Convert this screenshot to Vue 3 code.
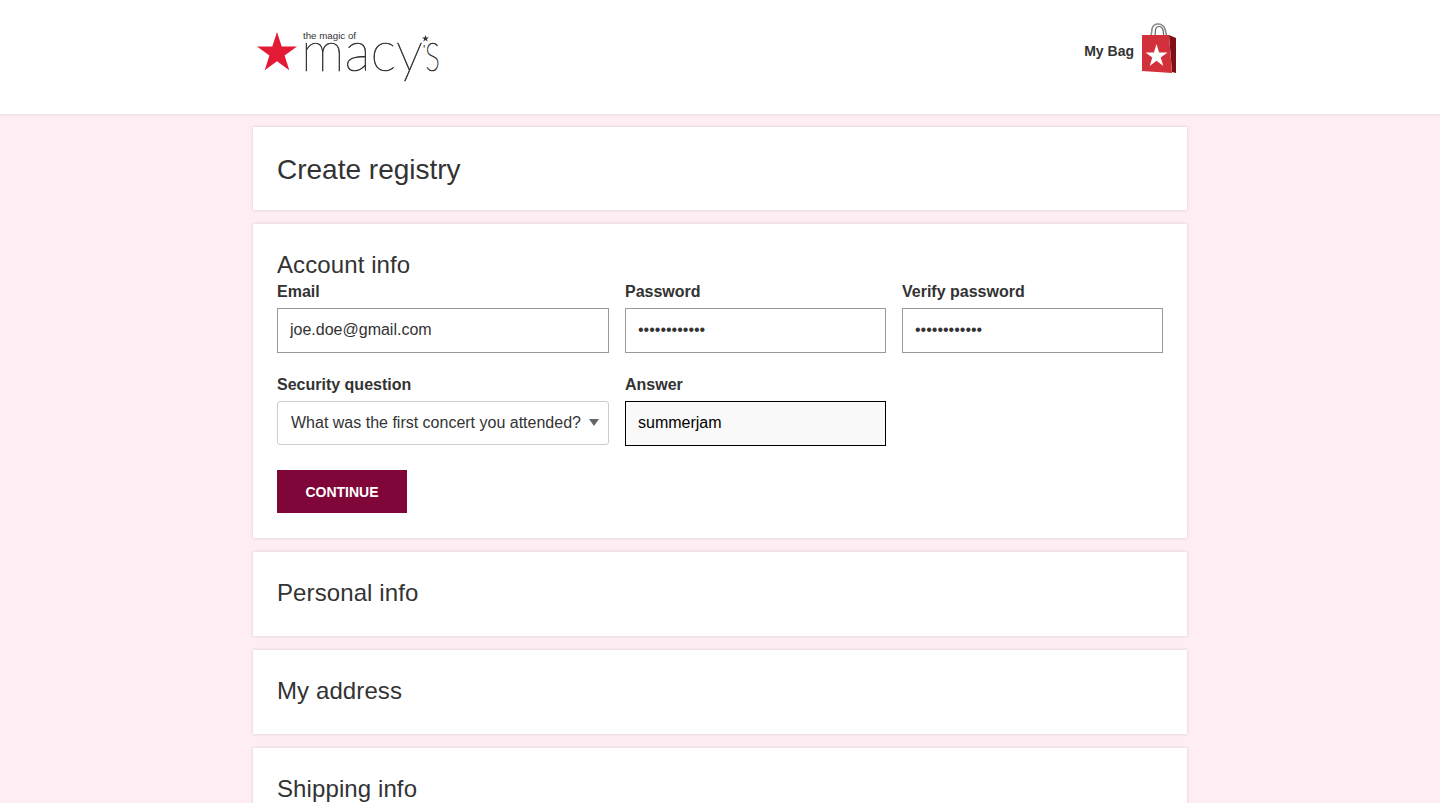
<template>
  <div class="page">
    <header class="topbar">
      <div class="topbar-in">
        <svg class="logo" width="210" height="88" viewBox="0 -24 210 88">
          <polygon fill="#e21a35" points="24,4 28.7,18.6 44,18.6 31.6,27.6 36.3,42.2 24,33.2 11.7,42.2 16.4,27.6 4,18.6 19.3,18.6" />
          <text x="50" y="11" class="logo-small" textLength="53" lengthAdjust="spacingAndGlyphs">the magic of</text>
          <text x="48" y="43" class="logo-word" textLength="122" lengthAdjust="spacingAndGlyphs">macy</text>
          <text x="170" y="26" class="logo-tick">'</text>
          <text x="172" y="43" class="logo-word" textLength="15" lengthAdjust="spacingAndGlyphs">s</text>
          <polygon fill="#333" points="172.5,7 173.4,9.5 176,9.5 173.9,11 174.7,13.5 172.5,12 170.3,13.5 171.1,11 169,9.5 171.6,9.5" />
        </svg>
        <div class="bag">
          <span class="bag-label">My Bag</span>
          <svg width="36" height="52" viewBox="0 0 36 52">
            <path d="M10 14 L11 6 Q12 1 17 1 Q22 1 24 6 L26 14" fill="none" stroke="#8a8a8a" stroke-width="1.6" />
            <path d="M14 13 L14.5 7 Q15 3.5 18 3.5 Q21 3.5 22 7 L23 14" fill="none" stroke="#666" stroke-width="1.2" />
            <polygon fill="#7e1016" points="28,12 35,15 35,50 31,49" />
            <polygon fill="#d2303a" points="1,12 28,12 31,50 1,48" />
            <polygon fill="#fff" points="15.5,21 18.1,29.4 26.5,29.4 19.7,34.6 22.3,43 15.5,37.8 8.7,43 11.3,34.6 4.5,29.4 12.9,29.4" />
          </svg>
        </div>
      </div>
    </header>

    <main class="wrap">
      <section class="card head-card">
        <h1>Create registry</h1>
      </section>

      <section class="card account">
        <h2>Account info</h2>
        <div class="form">
          <div class="field">
            <label>Email</label>
            <input type="text" value="joe.doe@gmail.com" />
          </div>
          <div class="field">
            <label>Password</label>
            <input type="password" value="123456789012" />
          </div>
          <div class="field">
            <label>Verify password</label>
            <input type="password" value="123456789012" />
          </div>
          <div class="field">
            <label>Security question</label>
            <div class="select-box">
              <select>
                <option>What was the first concert you attended?</option>
              </select>
              <span class="caret"></span>
            </div>
          </div>
          <div class="field">
            <label>Answer</label>
            <input class="active" type="text" value="summerjam" />
          </div>
        </div>
        <button class="continue">CONTINUE</button>
      </section>

      <section v-for="t in sections" :key="t" class="card closed">
        <h2>{{ t }}</h2>
      </section>
    </main>
  </div>
</template>

<script setup>
const sections = ['Personal info', 'My address', 'Shipping info']
</script>

<style>
html, body { overflow: hidden; height: 803px; }
</style>

<style scoped>
.page {
  min-height: 803px;
  background: #feeef3;
  font-family: "Liberation Sans", Arial, sans-serif;
  color: #333;
}
.topbar {
  height: 114px;
  background: #fff;
  box-shadow: 0 1px 3px rgba(0, 0, 0, 0.08);
}
.topbar-in {
  width: 934px;
  margin: 0 auto;
  height: 100%;
  display: flex;
  justify-content: space-between;
  align-items: flex-start;
}
.logo { margin: 4px 0 0 0; }
.logo-small { font-family: "Liberation Sans", sans-serif; font-size: 8.5px; fill: #333; }
.logo-word { font-family: Lato, sans-serif; font-weight: 100; font-size: 56px; fill: #333; stroke: #333; stroke-width: 0.6px; }
.logo-tick { font-family: "Liberation Sans", sans-serif; font-size: 12px; fill: #333; }
.bag {
  display: flex;
  align-items: center;
  gap: 7px;
  margin: 23px 10px 0 0;
}
.bag-label {
  font-size: 14px;
  font-weight: 700;
  margin-top: 4px;
}
.wrap {
  width: 934px;
  margin: 13px auto 0;
  display: flex;
  flex-direction: column;
  gap: 14px;
}
.card {
  background: #fff;
  box-shadow: 0 0 3px rgba(0, 0, 0, 0.16);
  padding: 0 24px;
}
.head-card {
  height: 83px;
  display: flex;
  align-items: center;
}
h1 {
  margin: 2px 0 0;
  font-size: 28px;
  font-weight: 400;
}
h2 {
  margin: 0;
  font-size: 24px;
  font-weight: 400;
  letter-spacing: 0.1px;
}
.closed {
  height: 84px;
  flex: none;
  display: flex;
  align-items: center;
}
.closed h2 { margin-bottom: 2px; }
.account {
  height: 314px;
  padding-top: 27px;
  box-sizing: border-box;
}
.account h2 { line-height: 28px; }
.form {
  display: grid;
  grid-template-columns: 332px 261px 261px;
  column-gap: 16px;
  row-gap: 23px;
  margin-top: 4px;
}
.field label {
  display: block;
  font-size: 16px;
  font-weight: 700;
  line-height: 18px;
  margin-bottom: 7px;
}
input {
  display: block;
  box-sizing: border-box;
  width: 100%;
  height: 45px;
  border: 1px solid #999;
  border-radius: 0;
  padding: 0 12px 2px;
  font: 16px "Liberation Sans", Arial, sans-serif;
  color: #333;
  background: #fff;
  outline: none;
}
input.active {
  border-color: #000;
  background: #f9f9f9;
  color: #000;
}
.select-box { position: relative; }
select {
  display: block;
  box-sizing: border-box;
  width: 100%;
  height: 44px;
  border: 1px solid #ccc;
  border-radius: 3px;
  padding: 0 0 2px 13px;
  font: 16px "Liberation Sans", Arial, sans-serif;
  color: #333;
  background: #fff;
  appearance: none;
  outline: none;
}
.caret {
  position: absolute;
  right: 10px;
  top: 18px;
  width: 0;
  height: 0;
  border-left: 5px solid transparent;
  border-right: 5px solid transparent;
  border-top: 7px solid #666;
}
.continue {
  display: block;
  width: 130px;
  height: 43px;
  margin-top: 24px;
  border: 0;
  background: #800538;
  color: #fff;
  font: 700 14px "Liberation Sans", Arial, sans-serif;
}
</style>
